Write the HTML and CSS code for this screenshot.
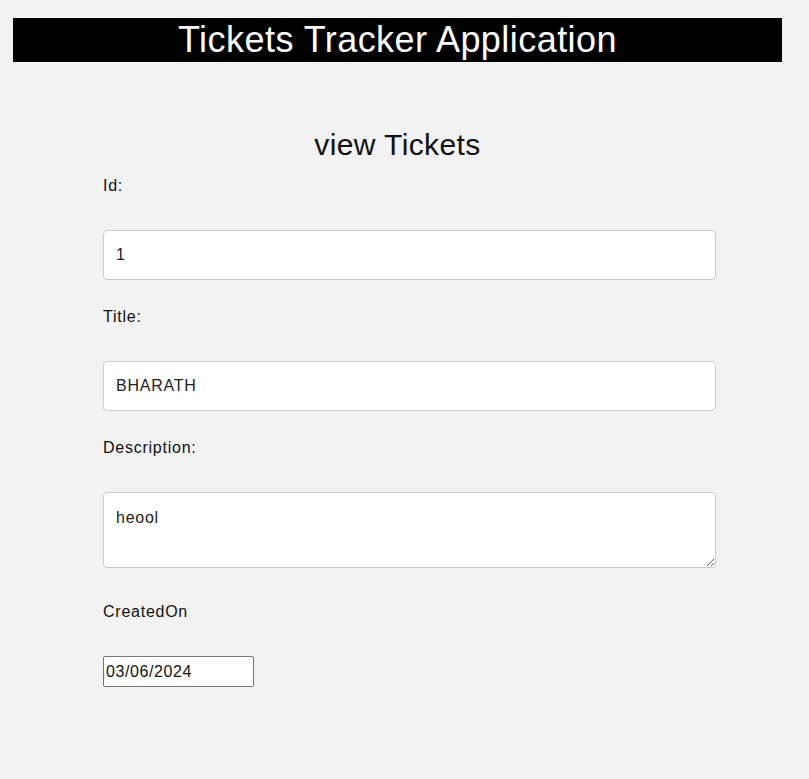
FILE: index.html
```html
<!DOCTYPE html>
<html lang="en">
<head>
<meta charset="utf-8">
<title>Tickets Tracker Application</title>
<link rel="stylesheet" href="styles.css">
</head>
<body>
<header class="app-header">Tickets Tracker Application</header>
<h2 class="page-title">view Tickets</h2>
<form class="ticket-form">
  <label class="field-label" for="id">Id:</label>
  <input class="field-input" id="id" type="text" value="1">
  <label class="field-label" for="title">Title:</label>
  <input class="field-input" id="title" type="text" value="BHARATH">
  <label class="field-label" for="desc">Description:</label>
  <textarea class="field-textarea" id="desc">heool</textarea>
  <label class="field-label label-created" for="created">CreatedOn</label>
  <input class="date-input" id="created" type="text" value="03/06/2024">
</form>
</body>
</html>
```
FILE: styles.css
```css
html, body {
  margin: 0;
  padding: 0;
  background: #f2f2f2;
  font-family: "Liberation Sans", Arial, sans-serif;
  color: #111;
}
body {
  padding-top: 18px;
  padding-bottom: 40px;
}
.app-header {
  margin: 0 27px 0 13px;
  height: 44px;
  line-height: 44px;
  background: #000;
  color: #fff;
  font-size: 36px;
  letter-spacing: 0.45px;
  text-align: center;
}
.page-title {
  margin: 66px 27px 0 13px;
  font-size: 30px;
  line-height: 34px;
  letter-spacing: 0.4px;
  font-weight: normal;
  text-align: center;
  color: #111;
}
.ticket-form {
  display: flex;
  flex-direction: column;
  align-items: flex-start;
  margin: 0 93px 0 103px;
}
.field-label {
  display: block;
  font-size: 16px;
  line-height: 20px;
  letter-spacing: 0.75px;
  margin-top: 27px;
  margin-bottom: 34px;
  color: #111;
}
.field-label:first-child {
  margin-top: 14px;
}
.field-input,
.field-textarea {
  box-sizing: border-box;
  width: 613px;
  margin: 0;
  background: #fff;
  border: 1px solid #ccc;
  border-radius: 4px;
  font-family: "Liberation Sans", Arial, sans-serif;
  font-size: 16px;
  letter-spacing: 0.75px;
  color: #222;
  padding: 0 12px;
}
.field-input {
  height: 50px;
}
.field-textarea {
  height: 76px;
  padding-top: 16px;
  line-height: 18px;
  resize: vertical;
  display: block;
}
.label-created {
  margin-top: 34px;
}
.date-input {
  box-sizing: border-box;
  width: 151px;
  height: 31px;
  margin: 0;
  padding: 1px 2px;
  border: 1px solid #767676;
  border-radius: 2px;
  background: #fff;
  font-family: "Liberation Sans", Arial, sans-serif;
  font-size: 16px;
  letter-spacing: 0.6px;
  color: #111;
}
```
